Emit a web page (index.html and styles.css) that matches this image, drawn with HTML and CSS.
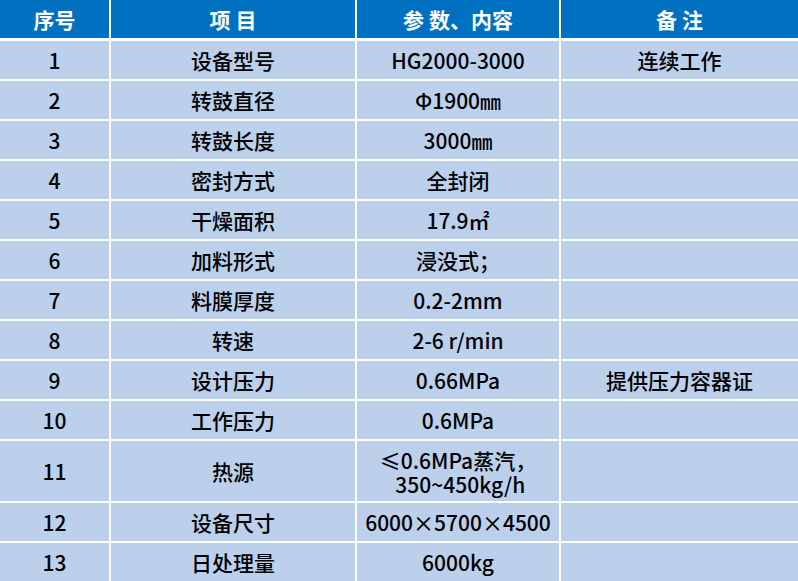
FILE: index.html
```html
<!DOCTYPE html>
<html lang="zh">
<head>
<meta charset="utf-8">
<title>设备参数</title>
<link rel="stylesheet" href="styles.css">
</head>
<body>
<div class="table">
  <div class="row head">
    <div class="cell">序号</div>
    <div class="cell">项 目</div>
    <div class="cell">参 数、内容</div>
    <div class="cell">备 注</div>
  </div>
  <div class="row"><div class="cell">1</div><div class="cell">设备型号</div><div class="cell">HG2000-3000</div><div class="cell">连续工作</div></div>
  <div class="row"><div class="cell">2</div><div class="cell">转鼓直径</div><div class="cell">Φ1900㎜</div><div class="cell"></div></div>
  <div class="row"><div class="cell">3</div><div class="cell">转鼓长度</div><div class="cell">3000㎜</div><div class="cell"></div></div>
  <div class="row"><div class="cell">4</div><div class="cell">密封方式</div><div class="cell">全封闭</div><div class="cell"></div></div>
  <div class="row"><div class="cell">5</div><div class="cell">干燥面积</div><div class="cell">17.9㎡</div><div class="cell"></div></div>
  <div class="row"><div class="cell">6</div><div class="cell">加料形式</div><div class="cell">浸没式；</div><div class="cell"></div></div>
  <div class="row"><div class="cell">7</div><div class="cell">料膜厚度</div><div class="cell">0.2-2mm</div><div class="cell"></div></div>
  <div class="row"><div class="cell">8</div><div class="cell">转速</div><div class="cell">2-6 r/min</div><div class="cell"></div></div>
  <div class="row"><div class="cell">9</div><div class="cell">设计压力</div><div class="cell">0.66MPa</div><div class="cell">提供压力容器证</div></div>
  <div class="row"><div class="cell">10</div><div class="cell">工作压力</div><div class="cell">0.6MPa</div><div class="cell"></div></div>
  <div class="row tall"><div class="cell">11</div><div class="cell">热源</div><div class="cell two"><span class="line">≤0.6MPa蒸汽，</span><span class="line">&nbsp;350~450kg/h</span></div><div class="cell"></div></div>
  <div class="row"><div class="cell">12</div><div class="cell">设备尺寸</div><div class="cell">6000×5700×4500</div><div class="cell"></div></div>
  <div class="row"><div class="cell">13</div><div class="cell">日处理量</div><div class="cell">6000kg</div><div class="cell"></div></div>
</div>
</body>
</html>
```

FILE: styles.css
```css
html, body {
  margin: 0;
  padding: 0;
  background: #ffffff;
}
body {
  width: 798px;
  height: 581px;
  overflow: hidden;
  font-family: "Noto Sans CJK SC", "Noto Sans", sans-serif;
}
.table {
  display: flex;
  flex-direction: column;
  gap: 2px;
  background: #ffffff;
}
.row {
  display: grid;
  grid-template-columns: 109px 244px 202px 1fr;
  column-gap: 2px;
  height: 38px;
}
.row.tall {
  height: 60px;
}
.cell {
  background: #bcd0ec;
  color: #000000;
  font-size: 21px;
  font-weight: 500;
  line-height: 26px;
  display: flex;
  align-items: center;
  justify-content: center;
  text-align: center;
  white-space: nowrap;
}
.cell.two {
  flex-direction: column;
  gap: 0;
  padding-top: 2px;
  box-sizing: border-box;
}
.cell.two .line {
  display: block;
  height: 24px;
  line-height: 24px;
}
.head {
  margin-bottom: 1px;
}
.head .cell {
  background: #0070c0;
  color: #ffffff;
  font-weight: bold;
  font-size: 21px;
}
```
